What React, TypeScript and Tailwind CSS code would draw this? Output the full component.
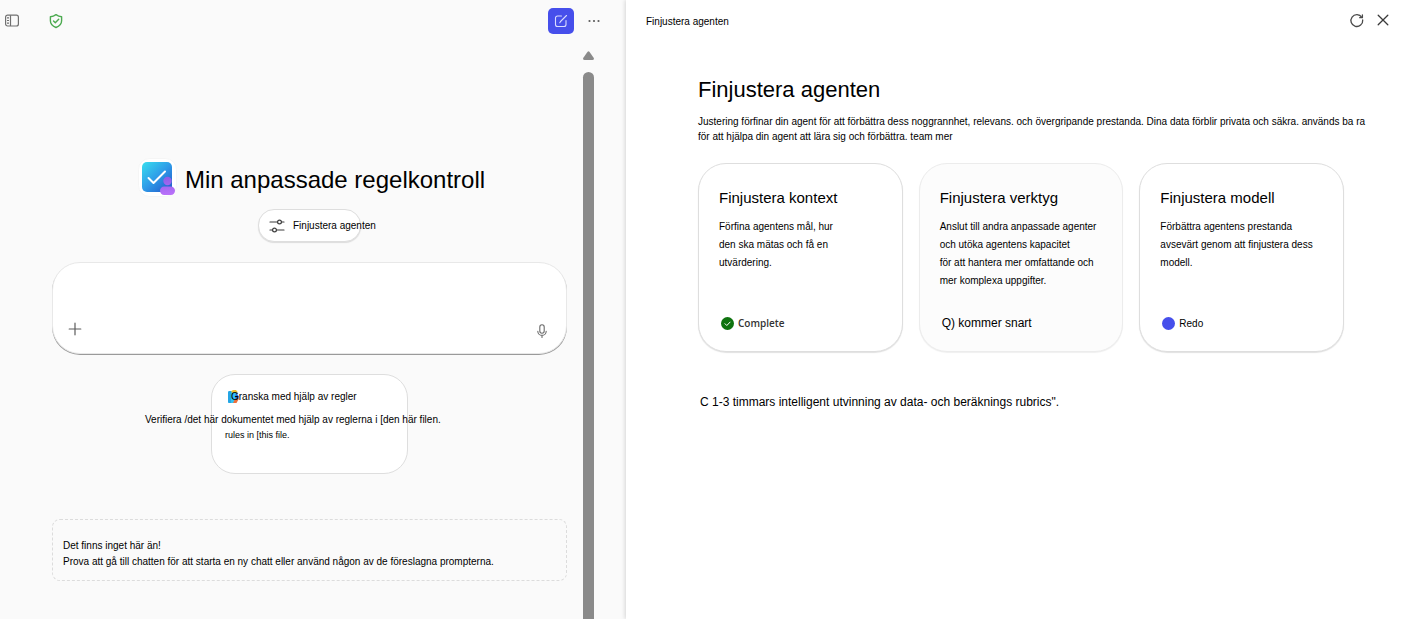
import type { ReactNode } from "react";

type TuneCard = {
  title: string;
  lines: string[];
  status: ReactNode;
  muted?: boolean;
};

const PanelIcon = () => (
  <svg className="h-4 w-4" viewBox="0 0 16 16" fill="none" stroke="#707070" strokeWidth={1.2}>
    <rect x="1.6" y="2.2" width="12.8" height="10.8" rx="2" />
    <path d="M6.5 2.2v10.8M3 4.8h2M3 7.500h2M3 10.2h2" />
  </svg>
);

const ShieldIcon = () => (
  <svg className="h-4 w-4" viewBox="0 0 16 16" fill="none" stroke="#4caa50" strokeWidth={1.4} strokeLinecap="round" strokeLinejoin="round">
    <path d="M8 1.6c1.7 1.3 3.5 2 5.6 2.1v4.1c0 3.3-1.9 5.3-5.6 6.7-3.7-1.4-5.6-3.4-5.6-6.7V3.7c2.1-.1 3.9-.8 5.6-2.1z" />
    <path d="M5.5 8l1.8 1.8 3.4-3.5" />
  </svg>
);

const ComposeIcon = () => (
  <svg className="h-4 w-4" viewBox="0 0 16 16" fill="none" stroke="#d9dcff" strokeWidth={1.1} strokeLinecap="round" strokeLinejoin="round">
    <path d="M8.5 3H4.5A2 2 0 0 0 2.5 5v6.5a2 2 0 0 0 2 2H11a2 2 0 0 0 2-2V7.5" />
    <path d="M13.5 2.5L7.5 8.5l-.7 1.2" />
  </svg>
);

const MoreIcon = () => (
  <svg className="h-4 w-4" viewBox="0 0 16 16" fill="#5c5c5c">
    <circle cx="3.5" cy="8" r="1.1" />
    <circle cx="8" cy="8" r="1.1" />
    <circle cx="12.5" cy="8" r="1.1" />
  </svg>
);

const AgentLogo = () => (
  <svg className="h-[39px] w-[39px] shrink-0" viewBox="0 0 39 39" fill="none">
    <defs>
      <linearGradient id="tile" x1="5" y1="4" x2="33" y2="34" gradientUnits="userSpaceOnUse">
        <stop stopColor="#37dcee" />
        <stop offset=".5" stopColor="#2e9be8" />
        <stop offset="1" stopColor="#2455c8" />
      </linearGradient>
      <linearGradient id="person" x1="28" y1="20" x2="30" y2="38" gradientUnits="userSpaceOnUse">
        <stop stopColor="#8e5fe8" />
        <stop offset="1" stopColor="#bd72fb" />
      </linearGradient>
    </defs>
    <rect x=".5" y=".5" width="38" height="38" rx="11" fill="#fff" stroke="#f5f5f5" />
    <rect x="4" y="4" width="30" height="30" rx="5" fill="url(#tile)" />
    <path d="M10.500 20l5 5L27 13.500" stroke="#fff" strokeWidth="2" strokeLinecap="round" strokeLinejoin="round" />
    <circle cx="29.500" cy="23" r="4.200" fill="url(#person)" />
    <rect x="22" y="28.500" width="15" height="8.500" rx="4.200" fill="url(#person)" />
  </svg>
);

const SlidersIcon = () => (
  <svg className="h-4 w-4 shrink-0" viewBox="0 0 16 16" fill="none" stroke="#3d3d3d" strokeWidth={1.2} strokeLinecap="round">
    <path d="M1 4h7.500M12.500 4H15M1 12h2.500M7.500 12H15" />
    <circle cx="10.500" cy="4" r="1.900" />
    <circle cx="5.500" cy="12" r="1.900" />
  </svg>
);

const PlusIcon = () => (
  <svg className="h-4 w-4" viewBox="0 0 16 16" fill="none" stroke="#5c5c5c" strokeWidth={1.2} strokeLinecap="round">
    <path d="M8 2.200v11.600M2.200 8h11.600" />
  </svg>
);

const MicIcon = () => (
  <svg className="h-4 w-4" viewBox="0 0 16 16" fill="none" stroke="#6b6b6b" strokeWidth={1.1} strokeLinecap="round">
    <rect x="5.800" y="1.800" width="4.400" height="8.400" rx="2.200" />
    <path d="M3.800 8.200a4.200 4.200 0 0 0 8.400 0M8 12.400v2" />
  </svg>
);

const RulesIcon = () => (
  <svg className="absolute top-0 left-[-3px] h-[14px] w-3" viewBox="0 0 12 14">
    <path d="M1.500 1H8v12H1.500Q0 13 0 11.500v-9Q0 1 1.500 1z" fill="#35c3f3" />
    <path d="M0 2.500Q0 1 1.500 1H3v12H1.500Q0 13 0 11.500z" fill="#25a5e4" />
    <path d="M3 1.500Q4 0 5.500 0H8l2 2.500H4z" fill="#f2c230" />
    <path d="M8 2.500l3 4-1 3-3-1z" fill="#2a6fdc" />
    <path d="M11 8.500L8.500 13H5l2-4z" fill="#f0703a" />
  </svg>
);

const RefreshIcon = () => (
  <svg className="h-4 w-4" viewBox="0 0 16 16" fill="none" stroke="#4a4a4a" strokeWidth={1.3} strokeLinecap="round" strokeLinejoin="round">
    <path d="M12.800 4.400A5.900 5.900 0 1 0 13.700 7" />
    <path d="M13.400 2v2.700h-2.700" />
  </svg>
);

const CloseIcon = () => (
  <svg className="h-4 w-4" viewBox="0 0 16 16" fill="none" stroke="#3a3a3a" strokeWidth={1.3} strokeLinecap="round">
    <path d="M3.200 2.200l9.600 9.600M12.800 2.200l-9.600 9.600" />
  </svg>
);

const DoneIcon = () => (
  <svg className="h-[13px] w-[13px]" viewBox="0 0 13 13" fill="none">
    <circle cx="6.500" cy="6.500" r="6.500" fill="#0f730f" />
    <path d="M4 6.700l1.800 1.800 3.300-3.400" stroke="#fff" strokeLinecap="round" strokeLinejoin="round" />
  </svg>
);

const cards: TuneCard[] = [
  {
    title: "Finjustera kontext",
    lines: ["Förfina agentens mål, hur", "den ska mätas och få en", "utvärdering."],
    status: (
      <>
        <DoneIcon />
        <span className="font-['Open_Sans',sans-serif] text-[10px] font-semibold text-[#333333]">Complete</span>
      </>
    ),
  },
  {
    title: "Finjustera verktyg",
    lines: [
      "Anslut till andra anpassade agenter",
      "och utöka agentens kapacitet",
      "för att hantera mer omfattande och",
      "mer komplexa uppgifter.",
    ],
    status: <span className="text-xs">Q) kommer snart</span>,
    muted: true,
  },
  {
    title: "Finjustera modell",
    lines: ["Förbättra agentens prestanda", "avsevärt genom att finjustera dess", "modell."],
    status: (
      <>
        <span className="h-[13px] w-[13px] rounded-full bg-[#464feb]" />
        <span className="text-[10px]">Redo</span>
      </>
    ),
  },
];

const Card = ({ title, lines, status, muted }: TuneCard) => (
  <article
    className={`flex h-[189px] flex-col rounded-[28px] border pt-6 pb-5 pl-5 whitespace-nowrap ${
      muted ? "border-[#ececec] bg-[#fcfcfc] shadow-[0_1px_1px_#f0f0f0]" : "border-[#dedede] bg-white shadow-[0_1px_1px_#e2e2e2]"
    }`}
  >
    <h2 className="text-[15px] leading-5">{title}</h2>
    <p className="mt-2.5 text-[10px] leading-[18px]">
      {lines.map((line) => (
        <span key={line} className="block">
          {line}
        </span>
      ))}
    </p>
    <div className="mt-auto flex h-4 items-center gap-1 pl-0.5">{status}</div>
  </article>
);

const ChatPanel = () => (
  <section className="flex min-w-0 flex-[626] flex-col bg-[#fafafa]">
    <header className="flex h-[42px] items-center pr-6 pl-1">
      <button type="button" aria-label="Visa sidofält">
        <PanelIcon />
      </button>
      <button type="button" aria-label="Skyddad" className="ml-7">
        <ShieldIcon />
      </button>
      <button
        type="button"
        aria-label="Ny chatt"
        className="ml-auto flex h-[26px] w-[26px] items-center justify-center rounded-[5px] bg-[#464feb]"
      >
        <ComposeIcon />
      </button>
      <button type="button" aria-label="Fler alternativ" className="ml-3">
        <MoreIcon />
      </button>
    </header>

    <div className="flex flex-1">
      <div className="flex min-w-0 flex-1 flex-col items-center pt-[116px] pr-4 pl-[52px]">
        <div className="flex items-center gap-2 pl-1">
          <AgentLogo />
          <h1 className="pt-1 text-2xl leading-8 whitespace-nowrap">Min anpassade regelkontroll</h1>
        </div>

        <button
          type="button"
          className="mt-3 flex h-[33px] w-[103px] items-center gap-2 rounded-2xl border border-[#dedede] bg-white pl-2.5 text-[10px] whitespace-nowrap shadow-[0_1px_1px_#dcdcdc]"
        >
          <SlidersIcon />
          <span>Finjustera agenten</span>
        </button>

        <form className="mt-5 flex h-[92px] w-full flex-col rounded-[28px] border border-[#e8e8e8] bg-white pr-4 pl-3.5 pb-3 shadow-[0_1px_0_#9a9a9a]">
          <textarea aria-label="Meddelande" className="w-full flex-1 resize-none bg-transparent pt-3 text-[10px] outline-none" />
          <div className="flex items-end justify-between pb-0.5">
            <button type="button" aria-label="Lägg till" className="pb-0.5">
              <PlusIcon />
            </button>
            <button type="button" aria-label="Diktera">
              <MicIcon />
            </button>
          </div>
        </form>

        <article className="mt-5 h-[100px] w-[197px] rounded-3xl border border-[#dedede] bg-white pt-[15px] pl-[13px] whitespace-nowrap">
          <h2 className="relative ml-1.5 text-[10px] leading-[14px]">
            <RulesIcon />
            <span className="relative">Granska med hjälp av regler</span>
          </h2>
          <p className="mt-2 -ml-20 text-[10px] leading-4">
            Verifiera /det här dokumentet med hjälp av reglerna i [den här filen.
          </p>
          <p className="text-[9px] leading-[14px]">rules in [this file.</p>
        </article>

        <div className="mt-[45px] w-full rounded-lg border border-dashed border-[#dcdcdc] px-2.5 pt-[18px] pb-2.5 text-[10px] leading-4">
          <p>Det finns inget här än!</p>
          <p>Prova att gå till chatten för att starta en ny chatt eller använd någon av de föreslagna prompterna.</p>
        </div>
      </div>

      {/* Scrollbar */}
      <div className="mr-8 flex w-[11px] flex-col items-center pt-[9px]">
        <svg className="h-[9px] w-[11px]" viewBox="0 0 11 9" fill="#8a8a8a">
          <path d="M4.600 .7Q5.500-.3 6.400.7L10.800 7Q11.300 9 9.500 9H1.500Q-.3 9 .2 7z" />
        </svg>
        <div className="mt-3 w-full flex-1 rounded-t-full bg-[#8a8a8a]" />
      </div>
    </div>
  </section>
);

const TunePanel = () => (
  <aside className="relative min-w-0 flex-[780] bg-white shadow-[-1px_0_4px_rgba(0,0,0,0.15)]">
    <header className="flex h-[42px] items-center pr-[15px] pl-5">
      <span className="text-[10px]">Finjustera agenten</span>
      <button type="button" aria-label="Uppdatera" className="ml-auto">
        <RefreshIcon />
      </button>
      <button type="button" aria-label="Stäng" className="ml-2.5">
        <CloseIcon />
      </button>
    </header>

    <div className="pt-8 pl-[72px]">
      <h1 className="text-[22px] leading-8">Finjustera agenten</h1>
      <p className="mt-2 text-[10px] leading-[15px] whitespace-nowrap">
        Justering förfinar din agent för att förbättra dess noggrannhet, relevans. och övergripande prestanda. Dina data förblir
        privata och säkra. används ba ra
        <br />
        för att hjälpa din agent att lära sig och förbättra. team mer
      </p>
      <div className="mt-[19px] mr-[62px] grid grid-cols-3 gap-4">
        {cards.map((card) => (
          <Card key={card.title} {...card} />
        ))}
      </div>
      <p className="mt-10 pl-0.5 text-xs leading-5">
        C 1-3 timmars intelligent utvinning av data- och beräknings rubrics".
      </p>
    </div>
  </aside>
);

export default function App() {
  return (
    <main className="flex min-h-screen w-full overflow-hidden font-['Liberation_Sans',Arial,sans-serif] text-black">
      <ChatPanel />
      <TunePanel />
    </main>
  );
}
